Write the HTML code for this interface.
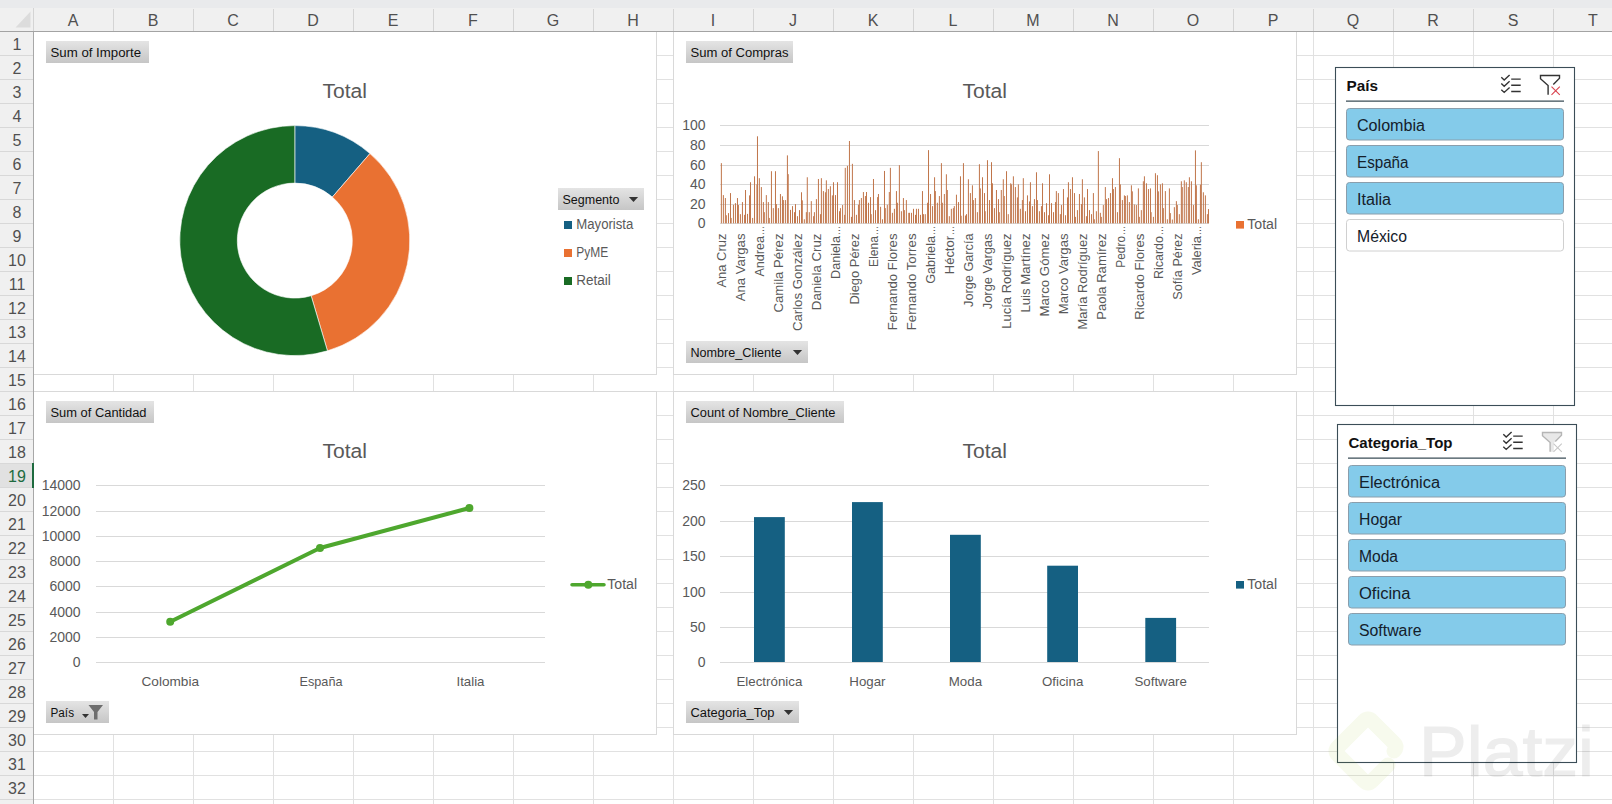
<!DOCTYPE html>
<html><head><meta charset="utf-8"><style>
html,body{margin:0;padding:0;background:#fff;overflow:hidden;width:1612px;height:804px}
svg{display:block}
text{font-family:"Liberation Sans", sans-serif}
</style></head><body>
<svg width="1612" height="804" viewBox="0 0 1612 804">
<rect x="0" y="0" width="1612" height="804" fill="#ffffff"/>
<path d="M113.5 32V804 M193.5 32V804 M273.5 32V804 M353.5 32V804 M433.5 32V804 M513.5 32V804 M593.5 32V804 M673.5 32V804 M753.5 32V804 M833.5 32V804 M913.5 32V804 M993.5 32V804 M1073.5 32V804 M1153.5 32V804 M1233.5 32V804 M1313.5 32V804 M1393.5 32V804 M1473.5 32V804 M1553.5 32V804 M34 55.5H1612 M34 79.5H1612 M34 103.5H1612 M34 127.5H1612 M34 151.5H1612 M34 175.5H1612 M34 199.5H1612 M34 223.5H1612 M34 247.5H1612 M34 271.5H1612 M34 295.5H1612 M34 319.5H1612 M34 343.5H1612 M34 367.5H1612 M34 391.5H1612 M34 415.5H1612 M34 439.5H1612 M34 463.5H1612 M34 487.5H1612 M34 511.5H1612 M34 535.5H1612 M34 559.5H1612 M34 583.5H1612 M34 607.5H1612 M34 631.5H1612 M34 655.5H1612 M34 679.5H1612 M34 703.5H1612 M34 727.5H1612 M34 751.5H1612 M34 775.5H1612 M34 799.5H1612" stroke="#e1e1e1" stroke-width="1" fill="none"/>
<defs><linearGradient id="btn" x1="0" y1="0" x2="0" y2="1"><stop offset="0" stop-color="#e4e4e4"/><stop offset="1" stop-color="#c6c6c6"/></linearGradient></defs>
<rect x="33.5" y="31.5" width="623" height="343" fill="#ffffff" stroke="#d9d9d9" stroke-width="1"/>
<rect x="46" y="41" width="103" height="22" fill="url(#btn)"/>
<text x="50.5" y="57.0" font-size="12.5" fill="#111111" font-weight="normal" text-anchor="start" textLength="90.5" lengthAdjust="spacingAndGlyphs">Sum of Importe</text>
<text x="322.5" y="98.0" font-size="20" fill="#595959" font-weight="normal" text-anchor="start" textLength="44.5" lengthAdjust="spacingAndGlyphs">Total</text>
<path d="M294.80 125.60A115 115 0 0 1 369.94 153.55L332.37 197.07A57.5 57.5 0 0 0 294.80 183.10Z" fill="#156082" stroke="#ffffff" stroke-width="0.6"/>
<path d="M369.94 153.55A115 115 0 0 1 327.46 350.86L311.13 295.73A57.5 57.5 0 0 0 332.37 197.07Z" fill="#e97132" stroke="#ffffff" stroke-width="0.6"/>
<path d="M327.46 350.86A115 115 0 1 1 294.80 125.60L294.80 183.10A57.5 57.5 0 1 0 311.13 295.73Z" fill="#196b24" stroke="#ffffff" stroke-width="0.6"/>
<rect x="558" y="188" width="86" height="22" fill="url(#btn)"/>
<text x="562.5" y="204.0" font-size="12.5" fill="#111111" font-weight="normal" text-anchor="start" textLength="57.0" lengthAdjust="spacingAndGlyphs">Segmento</text>
<path d="M628.9 197H638.1L633.5 202Z" fill="#333"/>
<rect x="564" y="221" width="8" height="8" fill="#156082"/>
<text x="576.3" y="228.9" font-size="14" fill="#595959" font-weight="normal" text-anchor="start" textLength="57.0" lengthAdjust="spacingAndGlyphs">Mayorista</text>
<rect x="564" y="249" width="8" height="8" fill="#e97132"/>
<text x="576.3" y="256.9" font-size="14" fill="#595959" font-weight="normal" text-anchor="start" textLength="32.0" lengthAdjust="spacingAndGlyphs">PyME</text>
<rect x="564" y="277" width="8" height="8" fill="#196b24"/>
<text x="576.3" y="284.9" font-size="14" fill="#595959" font-weight="normal" text-anchor="start" textLength="34.5" lengthAdjust="spacingAndGlyphs">Retail</text>
<rect x="673.5" y="31.5" width="623" height="343" fill="#ffffff" stroke="#d9d9d9" stroke-width="1"/>
<rect x="686" y="41" width="107" height="22" fill="url(#btn)"/>
<text x="690.5" y="57.0" font-size="12.5" fill="#111111" font-weight="normal" text-anchor="start" textLength="98.0" lengthAdjust="spacingAndGlyphs">Sum of Compras</text>
<text x="962.5" y="98.0" font-size="20" fill="#595959" font-weight="normal" text-anchor="start" textLength="44.5" lengthAdjust="spacingAndGlyphs">Total</text>
<path d="M720 223.5H1209 M720 204.5H1209 M720 184.5H1209 M720 165.5H1209 M720 145.5H1209 M720 125.5H1209" stroke="#d9d9d9" stroke-width="1"/>
<text x="705.6" y="227.7" font-size="14" fill="#595959" font-weight="normal" text-anchor="end">0</text>
<text x="705.6" y="208.7" font-size="14" fill="#595959" font-weight="normal" text-anchor="end">20</text>
<text x="705.6" y="188.7" font-size="14" fill="#595959" font-weight="normal" text-anchor="end">40</text>
<text x="705.6" y="169.7" font-size="14" fill="#595959" font-weight="normal" text-anchor="end">60</text>
<text x="705.6" y="149.7" font-size="14" fill="#595959" font-weight="normal" text-anchor="end">80</text>
<text x="705.6" y="129.7" font-size="14" fill="#595959" font-weight="normal" text-anchor="end">100</text>
<path d="M721.36 223.3V163.15 M723.37 223.3V195.10 M725.38 223.3V198.06 M726.32 223.3V215.24 M728.47 223.3V213.10 M730.49 223.3V193.09 M731.16 223.3V217.93 M733.44 223.3V204.77 M735.45 223.3V203.16 M737.47 223.3V198.06 M738.41 223.3V205.04 M740.42 223.3V214.17 M742.44 223.3V202.09 M744.58 223.3V214.84 M745.52 223.3V190.00 M747.54 223.3V213.90 M749.55 223.3V195.37 M750.49 223.3V182.22 M752.64 223.3V217.93 M754.52 223.3V176.31 M756.94 223.3V184.36 M757.47 223.3V136.30 M759.35 223.3V178.19 M761.37 223.3V187.05 M763.38 223.3V202.09 M764.32 223.3V212.16 M766.34 223.3V195.10 M768.35 223.3V202.09 M769.29 223.3V217.93 M771.44 223.3V171.21 M773.32 223.3V208.13 M775.47 223.3V171.21 M776.40 223.3V204.10 M778.42 223.3V208.13 M780.43 223.3V194.03 M782.45 223.3V196.31 M783.39 223.3V200.07 M785.40 223.3V200.07 M787.41 223.3V155.36 M788.22 223.3V174.16 M790.50 223.3V209.87 M792.52 223.3V206.11 M794.53 223.3V212.16 M795.47 223.3V204.10 M797.48 223.3V216.18 M799.50 223.3V210.14 M801.51 223.3V192.28 M802.32 223.3V200.34 M804.33 223.3V219.27 M806.35 223.3V212.16 M807.29 223.3V177.25 M809.30 223.3V212.16 M811.31 223.3V201.15 M813.60 223.3V216.18 M814.40 223.3V212.16 M816.42 223.3V199.13 M818.43 223.3V178.99 M820.44 223.3V214.17 M821.38 223.3V178.19 M823.40 223.3V191.08 M825.41 223.3V192.28 M826.35 223.3V180.34 M828.37 223.3V189.06 M830.38 223.3V186.24 M832.39 223.3V195.37 M833.47 223.3V182.22 M835.48 223.3V195.10 M837.50 223.3V182.22 M839.51 223.3V211.22 M840.45 223.3V208.13 M842.60 223.3V205.04 M844.61 223.3V214.84 M845.28 223.3V167.85 M847.43 223.3V165.83 M849.44 223.3V141.00 M851.46 223.3V216.86 M852.40 223.3V163.82 M854.41 223.3V200.07 M856.43 223.3V214.84 M858.44 223.3V204.77 M859.38 223.3V200.07 M861.39 223.3V198.06 M863.41 223.3V192.02 M865.42 223.3V196.04 M866.50 223.3V192.02 M868.51 223.3V202.76 M870.52 223.3V197.12 M871.20 223.3V214.17 M873.48 223.3V178.99 M875.49 223.3V210.14 M877.64 223.3V197.12 M878.45 223.3V194.03 M880.59 223.3V206.79 M882.47 223.3V219.27 M884.49 223.3V170.94 M885.29 223.3V208.13 M887.31 223.3V204.77 M889.32 223.3V192.02 M890.40 223.3V167.85 M892.41 223.3V212.83 M894.42 223.3V208.80 M896.44 223.3V191.08 M897.38 223.3V202.76 M899.39 223.3V165.16 M901.40 223.3V211.22 M903.42 223.3V198.06 M904.36 223.3V210.14 M906.37 223.3V200.07 M908.79 223.3V212.83 M909.46 223.3V212.83 M911.47 223.3V212.83 M913.49 223.3V208.80 M915.50 223.3V214.84 M916.44 223.3V208.80 M918.46 223.3V208.80 M920.47 223.3V214.84 M922.48 223.3V191.08 M923.56 223.3V214.17 M925.30 223.3V214.17 M927.59 223.3V202.76 M928.53 223.3V150.13 M930.54 223.3V194.03 M932.55 223.3V206.11 M934.57 223.3V177.25 M935.37 223.3V191.08 M937.39 223.3V202.76 M939.40 223.3V196.04 M941.42 223.3V163.15 M942.36 223.3V202.76 M944.37 223.3V194.03 M946.38 223.3V174.29 M947.32 223.3V190.00 M949.34 223.3V216.18 M951.35 223.3V208.80 M953.37 223.3V208.13 M954.31 223.3V206.11 M956.45 223.3V194.70 M958.47 223.3V202.09 M960.48 223.3V176.31 M961.15 223.3V215.78 M963.44 223.3V163.15 M965.45 223.3V215.51 M966.52 223.3V214.17 M968.40 223.3V179.26 M970.42 223.3V193.09 M972.43 223.3V185.30 M973.37 223.3V200.07 M975.38 223.3V198.06 M977.40 223.3V212.16 M979.41 223.3V164.22 M980.35 223.3V188.39 M982.50 223.3V177.25 M984.51 223.3V193.09 M985.19 223.3V211.22 M987.47 223.3V160.20 M989.48 223.3V200.07 M991.50 223.3V162.21 M992.44 223.3V183.29 M994.45 223.3V208.13 M996.46 223.3V190.00 M998.48 223.3V199.13 M999.28 223.3V212.16 M1001.30 223.3V190.00 M1003.31 223.3V179.26 M1004.25 223.3V196.04 M1006.53 223.3V171.21 M1008.28 223.3V214.17 M1010.70 223.3V183.29 M1011.37 223.3V184.36 M1013.38 223.3V176.31 M1015.40 223.3V187.05 M1017.41 223.3V197.39 M1018.35 223.3V184.36 M1020.36 223.3V208.80 M1022.38 223.3V200.07 M1023.32 223.3V178.19 M1025.47 223.3V211.22 M1027.48 223.3V195.37 M1029.49 223.3V201.41 M1030.43 223.3V182.22 M1032.45 223.3V206.11 M1034.46 223.3V199.13 M1036.47 223.3V172.28 M1037.41 223.3V200.07 M1039.43 223.3V211.22 M1041.44 223.3V206.11 M1042.52 223.3V183.29 M1044.53 223.3V212.16 M1046.54 223.3V203.16 M1048.56 223.3V215.24 M1049.50 223.3V174.29 M1051.51 223.3V203.16 M1053.53 223.3V212.16 M1055.54 223.3V202.09 M1056.35 223.3V191.08 M1058.36 223.3V193.09 M1060.37 223.3V214.17 M1061.45 223.3V205.04 M1063.46 223.3V189.06 M1065.48 223.3V215.24 M1067.49 223.3V197.39 M1068.43 223.3V182.22 M1070.44 223.3V189.06 M1072.46 223.3V177.25 M1074.47 223.3V193.09 M1075.41 223.3V216.86 M1077.43 223.3V210.14 M1079.44 223.3V194.03 M1081.45 223.3V204.10 M1082.39 223.3V179.26 M1084.41 223.3V197.39 M1086.42 223.3V216.18 M1087.50 223.3V189.06 M1089.51 223.3V210.14 M1091.52 223.3V214.17 M1093.40 223.3V193.09 M1094.34 223.3V219.27 M1096.36 223.3V211.22 M1098.37 223.3V151.07 M1100.38 223.3V212.83 M1101.32 223.3V216.86 M1103.34 223.3V205.04 M1105.35 223.3V187.05 M1106.43 223.3V199.13 M1108.44 223.3V198.06 M1110.45 223.3V193.09 M1112.47 223.3V178.19 M1113.41 223.3V189.06 M1115.42 223.3V187.05 M1117.44 223.3V212.16 M1119.45 223.3V158.18 M1120.39 223.3V184.36 M1122.40 223.3V200.07 M1124.42 223.3V195.37 M1125.36 223.3V196.04 M1127.37 223.3V195.37 M1129.39 223.3V202.09 M1131.40 223.3V185.30 M1132.34 223.3V191.35 M1134.35 223.3V204.50 M1136.37 223.3V205.04 M1138.38 223.3V188.39 M1139.32 223.3V216.86 M1141.34 223.3V210.14 M1143.35 223.3V181.28 M1144.42 223.3V176.31 M1146.44 223.3V183.29 M1148.45 223.3V189.06 M1150.47 223.3V188.39 M1151.14 223.3V212.16 M1153.42 223.3V216.86 M1155.43 223.3V173.22 M1157.45 223.3V175.23 M1158.39 223.3V191.35 M1160.40 223.3V184.36 M1162.41 223.3V183.29 M1163.35 223.3V208.13 M1165.37 223.3V191.08 M1167.38 223.3V219.27 M1169.40 223.3V188.39 M1170.34 223.3V213.10 M1172.35 223.3V219.54 M1174.36 223.3V207.19 M1176.38 223.3V201.15 M1177.32 223.3V205.04 M1179.33 223.3V214.17 M1181.35 223.3V181.28 M1182.29 223.3V187.05 M1184.30 223.3V180.34 M1186.31 223.3V182.22 M1188.33 223.3V187.05 M1189.40 223.3V177.25 M1191.42 223.3V181.28 M1193.43 223.3V205.04 M1195.44 223.3V150.39 M1196.38 223.3V185.30 M1198.40 223.3V219.27 M1200.41 223.3V184.63 M1201.35 223.3V162.21 M1203.37 223.3V192.28 M1205.38 223.3V195.37 M1207.39 223.3V214.17 M1208.47 223.3V209.07" stroke="#c0754a" stroke-width="1"/>
<text transform="translate(725.8,233.5) rotate(-90)" font-size="13" fill="#595959" text-anchor="end" textLength="54.1" lengthAdjust="spacingAndGlyphs">Ana Cruz</text>
<text transform="translate(744.8,233.5) rotate(-90)" font-size="13" fill="#595959" text-anchor="end" textLength="67.8" lengthAdjust="spacingAndGlyphs">Ana Vargas</text>
<text transform="translate(763.8,226) rotate(-90)" font-size="12" fill="#595959" text-anchor="end" textLength="9" lengthAdjust="spacingAndGlyphs">…</text>
<text transform="translate(763.8,236) rotate(-90)" font-size="13" fill="#595959" text-anchor="end" textLength="40.6" lengthAdjust="spacingAndGlyphs">Andrea</text>
<text transform="translate(782.8,233.5) rotate(-90)" font-size="13" fill="#595959" text-anchor="end" textLength="79.1" lengthAdjust="spacingAndGlyphs">Camila Pérez</text>
<text transform="translate(801.8,233.5) rotate(-90)" font-size="13" fill="#595959" text-anchor="end" textLength="97.6" lengthAdjust="spacingAndGlyphs">Carlos González</text>
<text transform="translate(820.8,233.5) rotate(-90)" font-size="13" fill="#595959" text-anchor="end" textLength="76.7" lengthAdjust="spacingAndGlyphs">Daniela Cruz</text>
<text transform="translate(839.8,226) rotate(-90)" font-size="12" fill="#595959" text-anchor="end" textLength="9" lengthAdjust="spacingAndGlyphs">…</text>
<text transform="translate(839.8,236) rotate(-90)" font-size="13" fill="#595959" text-anchor="end" textLength="43.0" lengthAdjust="spacingAndGlyphs">Daniela</text>
<text transform="translate(858.8,233.5) rotate(-90)" font-size="13" fill="#595959" text-anchor="end" textLength="71.0" lengthAdjust="spacingAndGlyphs">Diego Pérez</text>
<text transform="translate(877.8,226) rotate(-90)" font-size="12" fill="#595959" text-anchor="end" textLength="9" lengthAdjust="spacingAndGlyphs">…</text>
<text transform="translate(877.8,236) rotate(-90)" font-size="13" fill="#595959" text-anchor="end" textLength="30.9" lengthAdjust="spacingAndGlyphs">Elena</text>
<text transform="translate(896.8,233.5) rotate(-90)" font-size="13" fill="#595959" text-anchor="end" textLength="96.8" lengthAdjust="spacingAndGlyphs">Fernando Flores</text>
<text transform="translate(915.8,233.5) rotate(-90)" font-size="13" fill="#595959" text-anchor="end" textLength="96.8" lengthAdjust="spacingAndGlyphs">Fernando Torres</text>
<text transform="translate(934.8,226) rotate(-90)" font-size="12" fill="#595959" text-anchor="end" textLength="9" lengthAdjust="spacingAndGlyphs">…</text>
<text transform="translate(934.8,236) rotate(-90)" font-size="13" fill="#595959" text-anchor="end" textLength="47.8" lengthAdjust="spacingAndGlyphs">Gabriela</text>
<text transform="translate(953.8,226) rotate(-90)" font-size="12" fill="#595959" text-anchor="end" textLength="9" lengthAdjust="spacingAndGlyphs">…</text>
<text transform="translate(953.8,236) rotate(-90)" font-size="13" fill="#595959" text-anchor="end" textLength="38.2" lengthAdjust="spacingAndGlyphs">Héctor</text>
<text transform="translate(972.8,233.5) rotate(-90)" font-size="13" fill="#595959" text-anchor="end" textLength="73.4" lengthAdjust="spacingAndGlyphs">Jorge García</text>
<text transform="translate(991.8,233.5) rotate(-90)" font-size="13" fill="#595959" text-anchor="end" textLength="75.8" lengthAdjust="spacingAndGlyphs">Jorge Vargas</text>
<text transform="translate(1010.8,233.5) rotate(-90)" font-size="13" fill="#595959" text-anchor="end" textLength="95.2" lengthAdjust="spacingAndGlyphs">Lucía Rodríguez</text>
<text transform="translate(1029.8,233.5) rotate(-90)" font-size="13" fill="#595959" text-anchor="end" textLength="79.1" lengthAdjust="spacingAndGlyphs">Luis Martínez</text>
<text transform="translate(1048.8,233.5) rotate(-90)" font-size="13" fill="#595959" text-anchor="end" textLength="83.1" lengthAdjust="spacingAndGlyphs">Marco Gómez</text>
<text transform="translate(1067.8,233.5) rotate(-90)" font-size="13" fill="#595959" text-anchor="end" textLength="80.7" lengthAdjust="spacingAndGlyphs">Marco Vargas</text>
<text transform="translate(1086.8,233.5) rotate(-90)" font-size="13" fill="#595959" text-anchor="end" textLength="96.0" lengthAdjust="spacingAndGlyphs">María Rodríguez</text>
<text transform="translate(1105.8,233.5) rotate(-90)" font-size="13" fill="#595959" text-anchor="end" textLength="86.3" lengthAdjust="spacingAndGlyphs">Paola Ramírez</text>
<text transform="translate(1124.8,226) rotate(-90)" font-size="12" fill="#595959" text-anchor="end" textLength="9" lengthAdjust="spacingAndGlyphs">…</text>
<text transform="translate(1124.8,236) rotate(-90)" font-size="13" fill="#595959" text-anchor="end" textLength="31.7" lengthAdjust="spacingAndGlyphs">Pedro</text>
<text transform="translate(1143.8,233.5) rotate(-90)" font-size="13" fill="#595959" text-anchor="end" textLength="86.3" lengthAdjust="spacingAndGlyphs">Ricardo Flores</text>
<text transform="translate(1162.8,226) rotate(-90)" font-size="12" fill="#595959" text-anchor="end" textLength="9" lengthAdjust="spacingAndGlyphs">…</text>
<text transform="translate(1162.8,236) rotate(-90)" font-size="13" fill="#595959" text-anchor="end" textLength="43.0" lengthAdjust="spacingAndGlyphs">Ricardo</text>
<text transform="translate(1181.8,233.5) rotate(-90)" font-size="13" fill="#595959" text-anchor="end" textLength="66.2" lengthAdjust="spacingAndGlyphs">Sofía Pérez</text>
<text transform="translate(1200.8,226) rotate(-90)" font-size="12" fill="#595959" text-anchor="end" textLength="9" lengthAdjust="spacingAndGlyphs">…</text>
<text transform="translate(1200.8,236) rotate(-90)" font-size="13" fill="#595959" text-anchor="end" textLength="39.0" lengthAdjust="spacingAndGlyphs">Valeria</text>
<rect x="1236" y="221" width="8" height="7.6" fill="#e97132"/>
<text x="1247.3" y="228.6" font-size="14" fill="#595959" font-weight="normal" text-anchor="start" textLength="29.8" lengthAdjust="spacingAndGlyphs">Total</text>
<rect x="686" y="341" width="122" height="22" fill="url(#btn)"/>
<text x="690.5" y="357.0" font-size="12.5" fill="#111111" font-weight="normal" text-anchor="start" textLength="91.0" lengthAdjust="spacingAndGlyphs">Nombre_Cliente</text>
<path d="M792.9 350H802.1L797.5 355Z" fill="#333"/>
<rect x="33.5" y="391.5" width="623" height="343" fill="#ffffff" stroke="#d9d9d9" stroke-width="1"/>
<rect x="46" y="401" width="108" height="22" fill="url(#btn)"/>
<text x="50.5" y="417.0" font-size="12.5" fill="#111111" font-weight="normal" text-anchor="start" textLength="96.0" lengthAdjust="spacingAndGlyphs">Sum of Cantidad</text>
<text x="322.5" y="458.0" font-size="20" fill="#595959" font-weight="normal" text-anchor="start" textLength="44.5" lengthAdjust="spacingAndGlyphs">Total</text>
<path d="M96 662.5H545 M96 637.5H545 M96 612.5H545 M96 586.5H545 M96 561.5H545 M96 536.5H545 M96 511.5H545 M96 485.5H545" stroke="#d9d9d9" stroke-width="1"/>
<text x="80.6" y="666.7" font-size="14" fill="#595959" font-weight="normal" text-anchor="end">0</text>
<text x="80.6" y="641.7" font-size="14" fill="#595959" font-weight="normal" text-anchor="end">2000</text>
<text x="80.6" y="616.7" font-size="14" fill="#595959" font-weight="normal" text-anchor="end">4000</text>
<text x="80.6" y="590.7" font-size="14" fill="#595959" font-weight="normal" text-anchor="end">6000</text>
<text x="80.6" y="565.7" font-size="14" fill="#595959" font-weight="normal" text-anchor="end">8000</text>
<text x="80.6" y="540.7" font-size="14" fill="#595959" font-weight="normal" text-anchor="end">10000</text>
<text x="80.6" y="515.7" font-size="14" fill="#595959" font-weight="normal" text-anchor="end">12000</text>
<text x="80.6" y="489.7" font-size="14" fill="#595959" font-weight="normal" text-anchor="end">14000</text>
<polyline points="170.2,621.8 320,548 469.4,508" fill="none" stroke="#4ea72e" stroke-width="4" stroke-linejoin="round"/>
<circle cx="170.2" cy="621.8" r="4" fill="#4ea72e"/>
<circle cx="320" cy="548" r="4" fill="#4ea72e"/>
<circle cx="469.4" cy="508" r="4" fill="#4ea72e"/>
<text x="141.5" y="686.0" font-size="13.3" fill="#595959" font-weight="normal" text-anchor="start" textLength="57.5" lengthAdjust="spacingAndGlyphs">Colombia</text>
<text x="299.5" y="686.0" font-size="13.3" fill="#595959" font-weight="normal" text-anchor="start" textLength="43.0" lengthAdjust="spacingAndGlyphs">España</text>
<text x="456.5" y="686.0" font-size="13.3" fill="#595959" font-weight="normal" text-anchor="start" textLength="28.0" lengthAdjust="spacingAndGlyphs">Italia</text>
<path d="M572 584.8H604" stroke="#4ea72e" stroke-width="3.5" stroke-linecap="round"/>
<circle cx="588.3" cy="584.7" r="4" fill="#4ea72e"/>
<text x="607.3" y="588.6" font-size="14" fill="#595959" font-weight="normal" text-anchor="start" textLength="29.8" lengthAdjust="spacingAndGlyphs">Total</text>
<rect x="46" y="701" width="63" height="22" fill="url(#btn)"/>
<text x="50.5" y="717.0" font-size="12.5" fill="#111111" font-weight="normal" text-anchor="start" textLength="23.5" lengthAdjust="spacingAndGlyphs">País</text>
<path d="M82 714H89L85.5 718Z" fill="#333"/>
<path d="M88.5 705H103L97.5 712V719.5H94V712Z" fill="#6e6e6e"/>
<rect x="673.5" y="391.5" width="623" height="343" fill="#ffffff" stroke="#d9d9d9" stroke-width="1"/>
<rect x="686" y="401" width="158" height="22" fill="url(#btn)"/>
<text x="690.5" y="417.0" font-size="12.5" fill="#111111" font-weight="normal" text-anchor="start" textLength="145.0" lengthAdjust="spacingAndGlyphs">Count of Nombre_Cliente</text>
<text x="962.5" y="458.0" font-size="20" fill="#595959" font-weight="normal" text-anchor="start" textLength="44.5" lengthAdjust="spacingAndGlyphs">Total</text>
<path d="M720 662.5H1209 M720 627.5H1209 M720 592.5H1209 M720 556.5H1209 M720 521.5H1209 M720 485.5H1209" stroke="#d9d9d9" stroke-width="1"/>
<text x="705.6" y="666.7" font-size="14" fill="#595959" font-weight="normal" text-anchor="end">0</text>
<text x="705.6" y="631.7" font-size="14" fill="#595959" font-weight="normal" text-anchor="end">50</text>
<text x="705.6" y="596.7" font-size="14" fill="#595959" font-weight="normal" text-anchor="end">100</text>
<text x="705.6" y="560.7" font-size="14" fill="#595959" font-weight="normal" text-anchor="end">150</text>
<text x="705.6" y="525.7" font-size="14" fill="#595959" font-weight="normal" text-anchor="end">200</text>
<text x="705.6" y="489.7" font-size="14" fill="#595959" font-weight="normal" text-anchor="end">250</text>
<rect x="754" y="517.1" width="30.8" height="144.9" fill="#156082"/>
<text x="769.4" y="686.0" font-size="13.3" fill="#595959" font-weight="normal" text-anchor="middle">Electrónica</text>
<rect x="852" y="502.1" width="30.8" height="159.9" fill="#156082"/>
<text x="867.4" y="686.0" font-size="13.3" fill="#595959" font-weight="normal" text-anchor="middle">Hogar</text>
<rect x="950" y="534.8" width="30.8" height="127.2" fill="#156082"/>
<text x="965.4" y="686.0" font-size="13.3" fill="#595959" font-weight="normal" text-anchor="middle">Moda</text>
<rect x="1047.2" y="565.7" width="30.8" height="96.3" fill="#156082"/>
<text x="1062.6" y="686.0" font-size="13.3" fill="#595959" font-weight="normal" text-anchor="middle">Oficina</text>
<rect x="1145.3" y="617.9" width="30.8" height="44.1" fill="#156082"/>
<text x="1160.7" y="686.0" font-size="13.3" fill="#595959" font-weight="normal" text-anchor="middle">Software</text>
<rect x="1236" y="581" width="8" height="7.6" fill="#156082"/>
<text x="1247.3" y="588.6" font-size="14" fill="#595959" font-weight="normal" text-anchor="start" textLength="29.8" lengthAdjust="spacingAndGlyphs">Total</text>
<rect x="686" y="701" width="113" height="22" fill="url(#btn)"/>
<text x="690.5" y="717.0" font-size="12.5" fill="#111111" font-weight="normal" text-anchor="start" textLength="84.0" lengthAdjust="spacingAndGlyphs">Categoria_Top</text>
<path d="M783.9 710H793.1L788.5 715Z" fill="#333"/>
<rect x="1335.5" y="67.5" width="239" height="338" fill="#ffffff" stroke="#3b4d57" stroke-width="1.1"/>
<text x="1346.5" y="90.8" font-size="15.5" fill="#111111" font-weight="bold" text-anchor="start" textLength="31.5" lengthAdjust="spacingAndGlyphs">País</text>
<rect x="1346" y="100.5" width="218" height="1.25" fill="#3b4d57"/>
<rect x="1346.5" y="108.5" width="217" height="31.5" rx="3" fill="#84cbea" stroke="#8a9eac" stroke-width="1"/>
<text x="1357.0" y="130.7" font-size="16" fill="#14202a" font-weight="normal" text-anchor="start" textLength="68.0" lengthAdjust="spacingAndGlyphs">Colombia</text>
<rect x="1346.5" y="145.5" width="217" height="31.5" rx="3" fill="#84cbea" stroke="#8a9eac" stroke-width="1"/>
<text x="1357.0" y="167.7" font-size="16" fill="#14202a" font-weight="normal" text-anchor="start" textLength="51.5" lengthAdjust="spacingAndGlyphs">España</text>
<rect x="1346.5" y="182.5" width="217" height="31.5" rx="3" fill="#84cbea" stroke="#8a9eac" stroke-width="1"/>
<text x="1357.0" y="204.7" font-size="16" fill="#14202a" font-weight="normal" text-anchor="start" textLength="34.0" lengthAdjust="spacingAndGlyphs">Italia</text>
<rect x="1346.5" y="219.5" width="217" height="31.5" rx="3" fill="#ffffff" stroke="#d0d0d0" stroke-width="1"/>
<text x="1357.0" y="241.7" font-size="16" fill="#14202a" font-weight="normal" text-anchor="start" textLength="50.0" lengthAdjust="spacingAndGlyphs">México</text>
<path d="M1501.3 77.3L1504.2 80.0L1509.6 75.0 M1511.2 79.1H1520.7 M1501.3 83.5L1504.2 86.2L1509.6 81.2 M1511.2 85.3H1520.7 M1501.3 89.7L1504.2 92.4L1509.6 87.4 M1511.2 91.5H1520.7" stroke="#333" stroke-width="1.4" fill="none"/>
<path d="M1553.3 84.4L1559.5 78.3V75.5H1540.5V78.8L1548.1 85.6V94.8" stroke="#333" stroke-width="1.4" fill="none"/>
<path d="M1551.5 86.7L1559.8 94.8M1559.8 86.7L1551.5 94.8" stroke="#d9434e" stroke-width="1.1" fill="none"/>
<rect x="1337.5" y="424.5" width="239" height="338" fill="#ffffff" stroke="#3b4d57" stroke-width="1.1"/>
<text x="1348.5" y="447.8" font-size="15.5" fill="#111111" font-weight="bold" text-anchor="start" textLength="104.0" lengthAdjust="spacingAndGlyphs">Categoria_Top</text>
<rect x="1348" y="457.5" width="218" height="1.25" fill="#3b4d57"/>
<rect x="1348.5" y="465.5" width="217" height="31.5" rx="3" fill="#84cbea" stroke="#8a9eac" stroke-width="1"/>
<text x="1359.0" y="487.7" font-size="16" fill="#14202a" font-weight="normal" text-anchor="start" textLength="81.0" lengthAdjust="spacingAndGlyphs">Electrónica</text>
<rect x="1348.5" y="502.5" width="217" height="31.5" rx="3" fill="#84cbea" stroke="#8a9eac" stroke-width="1"/>
<text x="1359.0" y="524.7" font-size="16" fill="#14202a" font-weight="normal" text-anchor="start" textLength="43.0" lengthAdjust="spacingAndGlyphs">Hogar</text>
<rect x="1348.5" y="539.5" width="217" height="31.5" rx="3" fill="#84cbea" stroke="#8a9eac" stroke-width="1"/>
<text x="1359.0" y="561.7" font-size="16" fill="#14202a" font-weight="normal" text-anchor="start" textLength="39.0" lengthAdjust="spacingAndGlyphs">Moda</text>
<rect x="1348.5" y="576.5" width="217" height="31.5" rx="3" fill="#84cbea" stroke="#8a9eac" stroke-width="1"/>
<text x="1359.0" y="598.7" font-size="16" fill="#14202a" font-weight="normal" text-anchor="start" textLength="51.5" lengthAdjust="spacingAndGlyphs">Oficina</text>
<rect x="1348.5" y="613.5" width="217" height="31.5" rx="3" fill="#84cbea" stroke="#8a9eac" stroke-width="1"/>
<text x="1359.0" y="635.7" font-size="16" fill="#14202a" font-weight="normal" text-anchor="start" textLength="62.5" lengthAdjust="spacingAndGlyphs">Software</text>
<path d="M1503.3 434.3L1506.2 437.0L1511.6 432.0 M1513.2 436.1H1522.7 M1503.3 440.5L1506.2 443.2L1511.6 438.2 M1513.2 442.3H1522.7 M1503.3 446.7L1506.2 449.4L1511.6 444.4 M1513.2 448.5H1522.7" stroke="#333" stroke-width="1.4" fill="none"/>
<path d="M1542.5 432.5H1561.5V435.3L1553.8 443.0V451.8H1550.1V442.6L1542.5 435.8Z" fill="#e8e8e8"/>
<path d="M1555.3 441.4L1561.5 435.3V432.5H1542.5V435.8L1550.1 442.6V451.8" stroke="#b5b5b5" stroke-width="1.4" fill="none"/>
<path d="M1553.5 443.7L1561.8 451.8M1561.8 443.7L1553.5 451.8" stroke="#c8c8c8" stroke-width="1.1" fill="none"/>
<rect x="0" y="0" width="1612" height="8" fill="#e9eaec"/>
<rect x="0" y="8" width="1612" height="23" fill="#f0f0f0"/>
<path d="M113.5 9V31 M193.5 9V31 M273.5 9V31 M353.5 9V31 M433.5 9V31 M513.5 9V31 M593.5 9V31 M673.5 9V31 M753.5 9V31 M833.5 9V31 M913.5 9V31 M993.5 9V31 M1073.5 9V31 M1153.5 9V31 M1233.5 9V31 M1313.5 9V31 M1393.5 9V31 M1473.5 9V31 M1553.5 9V31" stroke="#d4d4d4" stroke-width="1"/>
<rect x="0" y="31" width="1612" height="1" fill="#a3a3a3"/>
<path d="M30.5 11.5V27.5H15.5Z" fill="#dcdcdc"/>
<rect x="0" y="32" width="33" height="772" fill="#f0f0f0"/>
<path d="M0 55.5H33 M0 79.5H33 M0 103.5H33 M0 127.5H33 M0 151.5H33 M0 175.5H33 M0 199.5H33 M0 223.5H33 M0 247.5H33 M0 271.5H33 M0 295.5H33 M0 319.5H33 M0 343.5H33 M0 367.5H33 M0 391.5H33 M0 415.5H33 M0 439.5H33 M0 463.5H33 M0 487.5H33 M0 511.5H33 M0 535.5H33 M0 559.5H33 M0 583.5H33 M0 607.5H33 M0 631.5H33 M0 655.5H33 M0 679.5H33 M0 703.5H33 M0 727.5H33 M0 751.5H33 M0 775.5H33 M0 799.5H33" stroke="#d8d8d8" stroke-width="1"/>
<rect x="33" y="32" width="1" height="772" fill="#a8a8a8"/>
<rect x="33" y="8" width="1" height="23" fill="#d4d4d4"/>
<rect x="0" y="464" width="33" height="23" fill="#e1e1e1"/>
<text x="73.0" y="26.0" font-size="16" fill="#505050" font-weight="normal" text-anchor="middle">A</text>
<text x="153.0" y="26.0" font-size="16" fill="#505050" font-weight="normal" text-anchor="middle">B</text>
<text x="233.0" y="26.0" font-size="16" fill="#505050" font-weight="normal" text-anchor="middle">C</text>
<text x="313.0" y="26.0" font-size="16" fill="#505050" font-weight="normal" text-anchor="middle">D</text>
<text x="393.0" y="26.0" font-size="16" fill="#505050" font-weight="normal" text-anchor="middle">E</text>
<text x="473.0" y="26.0" font-size="16" fill="#505050" font-weight="normal" text-anchor="middle">F</text>
<text x="553.0" y="26.0" font-size="16" fill="#505050" font-weight="normal" text-anchor="middle">G</text>
<text x="633.0" y="26.0" font-size="16" fill="#505050" font-weight="normal" text-anchor="middle">H</text>
<text x="713.0" y="26.0" font-size="16" fill="#505050" font-weight="normal" text-anchor="middle">I</text>
<text x="793.0" y="26.0" font-size="16" fill="#505050" font-weight="normal" text-anchor="middle">J</text>
<text x="873.0" y="26.0" font-size="16" fill="#505050" font-weight="normal" text-anchor="middle">K</text>
<text x="953.0" y="26.0" font-size="16" fill="#505050" font-weight="normal" text-anchor="middle">L</text>
<text x="1033.0" y="26.0" font-size="16" fill="#505050" font-weight="normal" text-anchor="middle">M</text>
<text x="1113.0" y="26.0" font-size="16" fill="#505050" font-weight="normal" text-anchor="middle">N</text>
<text x="1193.0" y="26.0" font-size="16" fill="#505050" font-weight="normal" text-anchor="middle">O</text>
<text x="1273.0" y="26.0" font-size="16" fill="#505050" font-weight="normal" text-anchor="middle">P</text>
<text x="1353.0" y="26.0" font-size="16" fill="#505050" font-weight="normal" text-anchor="middle">Q</text>
<text x="1433.0" y="26.0" font-size="16" fill="#505050" font-weight="normal" text-anchor="middle">R</text>
<text x="1513.0" y="26.0" font-size="16" fill="#505050" font-weight="normal" text-anchor="middle">S</text>
<text x="1593.0" y="26.0" font-size="16" fill="#505050" font-weight="normal" text-anchor="middle">T</text>
<text x="17.0" y="50.0" font-size="16" fill="#505050" font-weight="normal" text-anchor="middle">1</text>
<text x="17.0" y="74.0" font-size="16" fill="#505050" font-weight="normal" text-anchor="middle">2</text>
<text x="17.0" y="98.0" font-size="16" fill="#505050" font-weight="normal" text-anchor="middle">3</text>
<text x="17.0" y="122.0" font-size="16" fill="#505050" font-weight="normal" text-anchor="middle">4</text>
<text x="17.0" y="146.0" font-size="16" fill="#505050" font-weight="normal" text-anchor="middle">5</text>
<text x="17.0" y="170.0" font-size="16" fill="#505050" font-weight="normal" text-anchor="middle">6</text>
<text x="17.0" y="194.0" font-size="16" fill="#505050" font-weight="normal" text-anchor="middle">7</text>
<text x="17.0" y="218.0" font-size="16" fill="#505050" font-weight="normal" text-anchor="middle">8</text>
<text x="17.0" y="242.0" font-size="16" fill="#505050" font-weight="normal" text-anchor="middle">9</text>
<text x="17.0" y="266.0" font-size="16" fill="#505050" font-weight="normal" text-anchor="middle">10</text>
<text x="17.0" y="290.0" font-size="16" fill="#505050" font-weight="normal" text-anchor="middle">11</text>
<text x="17.0" y="314.0" font-size="16" fill="#505050" font-weight="normal" text-anchor="middle">12</text>
<text x="17.0" y="338.0" font-size="16" fill="#505050" font-weight="normal" text-anchor="middle">13</text>
<text x="17.0" y="362.0" font-size="16" fill="#505050" font-weight="normal" text-anchor="middle">14</text>
<text x="17.0" y="386.0" font-size="16" fill="#505050" font-weight="normal" text-anchor="middle">15</text>
<text x="17.0" y="410.0" font-size="16" fill="#505050" font-weight="normal" text-anchor="middle">16</text>
<text x="17.0" y="434.0" font-size="16" fill="#505050" font-weight="normal" text-anchor="middle">17</text>
<text x="17.0" y="458.0" font-size="16" fill="#505050" font-weight="normal" text-anchor="middle">18</text>
<text x="17.0" y="482.0" font-size="16" fill="#1e6b3f" font-weight="normal" text-anchor="middle">19</text>
<text x="17.0" y="506.0" font-size="16" fill="#505050" font-weight="normal" text-anchor="middle">20</text>
<text x="17.0" y="530.0" font-size="16" fill="#505050" font-weight="normal" text-anchor="middle">21</text>
<text x="17.0" y="554.0" font-size="16" fill="#505050" font-weight="normal" text-anchor="middle">22</text>
<text x="17.0" y="578.0" font-size="16" fill="#505050" font-weight="normal" text-anchor="middle">23</text>
<text x="17.0" y="602.0" font-size="16" fill="#505050" font-weight="normal" text-anchor="middle">24</text>
<text x="17.0" y="626.0" font-size="16" fill="#505050" font-weight="normal" text-anchor="middle">25</text>
<text x="17.0" y="650.0" font-size="16" fill="#505050" font-weight="normal" text-anchor="middle">26</text>
<text x="17.0" y="674.0" font-size="16" fill="#505050" font-weight="normal" text-anchor="middle">27</text>
<text x="17.0" y="698.0" font-size="16" fill="#505050" font-weight="normal" text-anchor="middle">28</text>
<text x="17.0" y="722.0" font-size="16" fill="#505050" font-weight="normal" text-anchor="middle">29</text>
<text x="17.0" y="746.0" font-size="16" fill="#505050" font-weight="normal" text-anchor="middle">30</text>
<text x="17.0" y="770.0" font-size="16" fill="#505050" font-weight="normal" text-anchor="middle">31</text>
<text x="17.0" y="794.0" font-size="16" fill="#505050" font-weight="normal" text-anchor="middle">32</text>
<text x="17.0" y="818.0" font-size="16" fill="#505050" font-weight="normal" text-anchor="middle">33</text>
<rect x="32" y="463" width="2" height="25" fill="#1e6b3f"/>
<g opacity="0.08"><path d="M1388 765 L1372 781 Q1368 785 1364 781 L1338 755 Q1334 751 1338 747 L1364 721 Q1368 717 1372 721 L1394 743 Q1398 747 1394 751" fill="none" stroke="#9cc31c" stroke-width="15" stroke-linecap="round" stroke-linejoin="round"/></g>
<g opacity="0.068"><text x="1419" y="776" font-size="71" fill="#000" stroke="#000" stroke-width="1.2" textLength="175" lengthAdjust="spacingAndGlyphs">Platzi</text></g>
</svg>
</body></html>
